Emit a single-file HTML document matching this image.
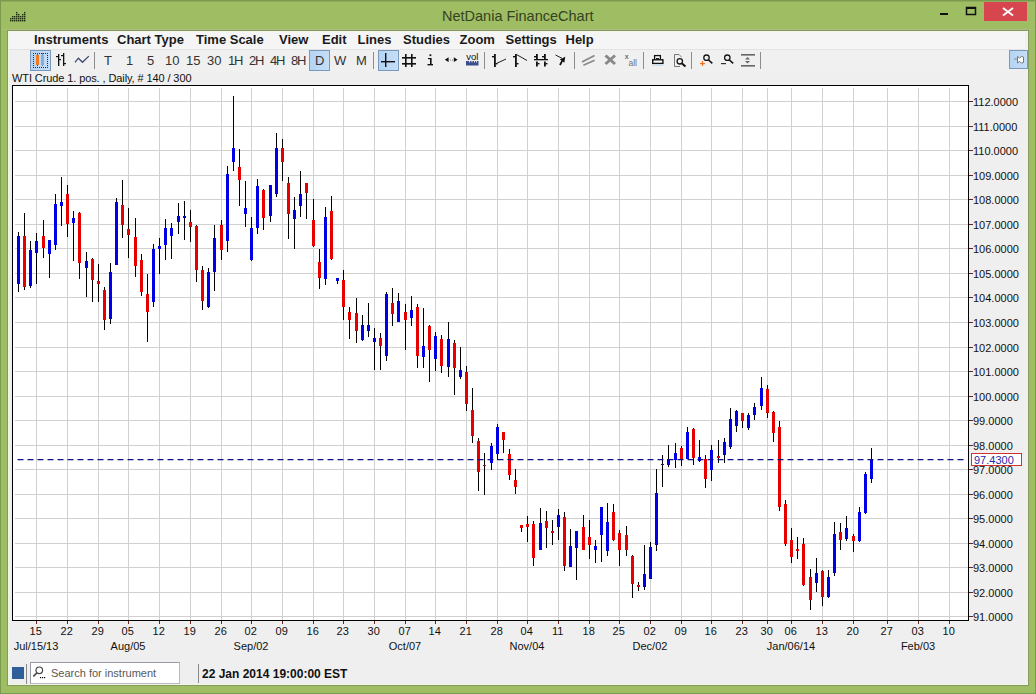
<!DOCTYPE html>
<html><head><meta charset="utf-8">
<style>
html,body{margin:0;padding:0;}
body{width:1036px;height:694px;overflow:hidden;position:relative;background:#9fbd63;font-family:"Liberation Sans",sans-serif;}
.abs{position:absolute;}
#title{position:absolute;left:0;top:0;width:1036px;height:30px;}
#client{position:absolute;left:7px;top:30px;width:1022px;height:656px;background:#efefef;border:1px solid #86995f;box-sizing:border-box;}
#client2{position:absolute;left:8px;top:31px;width:1020px;height:654px;border:1px solid #f0f8e4;box-sizing:border-box;}
#edge{position:absolute;left:0;top:0;width:1036px;height:694px;border:1px solid #7a9a4e;box-sizing:border-box;}
#menubar{position:absolute;left:9px;top:32px;width:1016px;height:17px;background:#f5f5f5;border-bottom:1px solid #e3e3e3;}
#menubar span{position:absolute;top:0px;font-weight:bold;font-size:13px;color:#1a1a1a;}
#toolbar{position:absolute;left:9px;top:50px;width:1018px;height:22px;background:#f0f0f0;}
.tb{position:absolute;top:53.5px;font-size:13px;color:#333;line-height:13px;}
.sel{position:absolute;background:linear-gradient(90deg,#b4d4f3,#c6def7);border:1px solid #7898bc;box-sizing:border-box;}
.sep{position:absolute;width:1px;background:#9a9a9a;}
svg text.ax{font-family:"Liberation Sans",sans-serif;font-size:11px;fill:#111;}
</style></head><body>
<div id="title">
  <div class="abs" style="left:0;top:0;width:1036px;height:1px;background:#74904a"></div><div class="abs" style="left:0;top:1px;width:1036px;height:1px;background:#8eac5c"></div>
  <div class="abs" style="left:0;top:29px;width:1036px;height:1px;background:#aabb86"></div>
  <div class="abs" style="left:442px;top:7.5px;font-size:14.5px;color:#334322;">NetDania FinanceChart</div>
  <div class="abs" style="left:984px;top:2px;width:43px;height:19px;background:#d7464e;"></div>
  <svg class="abs" style="left:0;top:0" width="1036" height="30">
    <g fill="#fff"><path d="M1003 8 L1013 15.5 M1013 8 L1003 15.5" stroke="#fff" stroke-width="1.8"/></g>
    <rect x="940" y="13" width="8" height="2" fill="#111"/>
    <rect x="966.5" y="7.5" width="9" height="7" fill="none" stroke="#111" stroke-width="1.5"/>
    <rect x="966" y="7" width="10" height="2" fill="#111"/>
    <g fill="#1c2a10"><rect x="16" y="12" width="1.4" height="1.4"/><rect x="24" y="12" width="1.4" height="1.4"/><rect x="16" y="14" width="1.4" height="1.4"/><rect x="18" y="14" width="1.4" height="1.4"/><rect x="22" y="14" width="1.4" height="1.4"/><rect x="24" y="14" width="1.4" height="1.4"/><rect x="12" y="16" width="1.4" height="1.4"/><rect x="14" y="16" width="1.4" height="1.4"/><rect x="16" y="16" width="1.4" height="1.4"/><rect x="18" y="16" width="1.4" height="1.4"/><rect x="20" y="16" width="1.4" height="1.4"/><rect x="22" y="16" width="1.4" height="1.4"/><rect x="24" y="16" width="1.4" height="1.4"/><rect x="10" y="18" width="1.4" height="1.4"/><rect x="12" y="18" width="1.4" height="1.4"/><rect x="14" y="18" width="1.4" height="1.4"/><rect x="16" y="18" width="1.4" height="1.4"/><rect x="18" y="18" width="1.4" height="1.4"/><rect x="20" y="18" width="1.4" height="1.4"/><rect x="22" y="18" width="1.4" height="1.4"/><rect x="24" y="18" width="1.4" height="1.4"/><rect x="10" y="20" width="1.4" height="1.4"/><rect x="12" y="20" width="1.4" height="1.4"/><rect x="14" y="20" width="1.4" height="1.4"/><rect x="16" y="20" width="1.4" height="1.4"/><rect x="18" y="20" width="1.4" height="1.4"/><rect x="20" y="20" width="1.4" height="1.4"/><rect x="22" y="20" width="1.4" height="1.4"/><rect x="24" y="20" width="1.4" height="1.4"/></g>
  </svg>
</div>
<div id="edge"></div><div id="client"></div><div id="client2"></div>
<div id="menubar">
  <span style="left:25px">Instruments</span>
  <span style="left:108px">Chart Type</span>
  <span style="left:187px">Time Scale</span>
  <span style="left:270px">View</span>
  <span style="left:313px">Edit</span>
  <span style="left:348.5px">Lines</span>
  <span style="left:394px">Studies</span>
  <span style="left:450.5px">Zoom</span>
  <span style="left:496.5px">Settings</span>
  <span style="left:556.5px">Help</span>
</div>
<div id="toolbar"></div>
<div class="sel" style="left:30px;top:50px;width:21px;height:21px;"></div>
<div class="sel" style="left:309px;top:50px;width:21px;height:21px;"></div>
<div class="sel" style="left:378px;top:50px;width:21px;height:21px;"></div>
<div class="sel" style="left:1009px;top:50px;width:19px;height:19px;"></div>
<svg class="abs" style="left:0;top:0" width="1036" height="80">
<g fill="#1a2a4a"><rect x="33" y="53" width="1" height="1"/><rect x="33" y="67" width="1" height="1"/><rect x="35" y="53" width="1" height="1"/><rect x="35" y="67" width="1" height="1"/><rect x="37" y="53" width="1" height="1"/><rect x="37" y="67" width="1" height="1"/><rect x="39" y="53" width="1" height="1"/><rect x="39" y="67" width="1" height="1"/><rect x="41" y="53" width="1" height="1"/><rect x="41" y="67" width="1" height="1"/><rect x="43" y="53" width="1" height="1"/><rect x="43" y="67" width="1" height="1"/><rect x="45" y="53" width="1" height="1"/><rect x="45" y="67" width="1" height="1"/><rect x="47" y="53" width="1" height="1"/><rect x="47" y="67" width="1" height="1"/><rect x="33" y="55" width="1" height="1"/><rect x="47" y="55" width="1" height="1"/><rect x="33" y="57" width="1" height="1"/><rect x="47" y="57" width="1" height="1"/><rect x="33" y="59" width="1" height="1"/><rect x="47" y="59" width="1" height="1"/><rect x="33" y="61" width="1" height="1"/><rect x="47" y="61" width="1" height="1"/><rect x="33" y="63" width="1" height="1"/><rect x="47" y="63" width="1" height="1"/><rect x="33" y="65" width="1" height="1"/><rect x="47" y="65" width="1" height="1"/></g>
<rect x="37" y="53" width="1" height="13" fill="#7a4a20"/><rect x="36" y="55" width="3" height="10" fill="#f07a20"/>
<rect x="42" y="53" width="1" height="13" fill="#6080b0"/><rect x="41" y="55" width="3" height="10" fill="#88acdc"/>
<g fill="#111">
<rect x="58" y="54" width="1.3" height="12"/><rect x="56" y="56" width="2" height="1.2"/><rect x="59" y="59" width="2" height="1.2"/>
<rect x="63" y="53" width="1.3" height="13"/><rect x="61" y="55" width="2" height="1.2"/><rect x="64" y="63" width="2" height="1.2"/>
</g>
<polyline points="75,62.3 78.4,58.2 82.5,62.3 88.8,56.1" fill="none" stroke="#3a4a6a" stroke-width="1.3"/>
<g fill="#8c8c8c">
<rect x="94" y="52" width="1" height="17"/><rect x="373" y="52" width="1" height="17"/><rect x="484" y="52" width="1" height="17"/>
<rect x="574" y="52" width="1" height="17"/><rect x="643" y="52" width="1" height="17"/><rect x="691" y="52" width="1" height="17"/><rect x="760" y="52" width="1" height="17"/>
</g>
<g fill="#111">
<rect x="385" y="53" width="1.4" height="14"/><rect x="381" y="61" width="14" height="1.4"/>
<rect x="405" y="54" width="1.6" height="13"/><rect x="411" y="54" width="1.6" height="13"/>
<rect x="402" y="57" width="14" height="1.6"/><rect x="402" y="63" width="14" height="1.6"/>
<rect x="429.5" y="54.3" width="1.8" height="1.8"/><rect x="430" y="58" width="1.6" height="6.5"/><rect x="428" y="58" width="2" height="1.2"/><rect x="427.5" y="64" width="5.5" height="1.4"/>
<polygon points="444.8,59.7 448.6,57.3 448.6,62.1"/><polygon points="457.6,59.7 453.8,57.3 453.8,62.1"/>
<rect x="450" y="59.5" width="1" height="1" fill="#777"/><rect x="452" y="59.5" width="1" height="1" fill="#777"/>
</g>
<text x="466.3" y="60.2" style="font:9.5px 'Liberation Sans',sans-serif" fill="#111">vol</text>
<rect x="466" y="61" width="12.5" height="4.5" fill="#3c4c8c"/>
<g fill="#dde"><rect x="469" y="61" width="1" height="1.5"/><rect x="471.5" y="61" width="1" height="1.5"/><rect x="474" y="61" width="1" height="1.5"/><rect x="476" y="61" width="1" height="1.5"/></g>
<g fill="#111">
<rect x="494" y="54" width="1.8" height="13"/><rect x="492" y="56" width="2" height="1.4"/><rect x="495.5" y="63" width="2" height="1.4"/>
<rect x="515" y="54" width="1.8" height="13"/><rect x="513" y="56" width="2" height="1.4"/><rect x="516.5" y="63" width="2" height="1.4"/>
<rect x="536" y="54" width="1.8" height="5.5"/><rect x="536" y="61.5" width="1.8" height="5"/><rect x="544" y="54" width="1.8" height="5.5"/><rect x="544" y="61.5" width="1.8" height="5"/>
<rect x="534" y="59" width="14" height="1.3"/>
<rect x="534" y="56" width="2" height="1.4"/><rect x="542" y="56" width="2" height="1.4"/><rect x="537.5" y="63" width="2" height="1.4"/><rect x="545.5" y="63" width="2" height="1.4"/>
<polygon points="565.3,56.8 564.3,62.8 562.8,61.6 560.8,65.6 559.2,64.6 561.4,60.6 559.8,59.6"/>
</g>
<line x1="497" y1="63.2" x2="506" y2="59" stroke="#222" stroke-width="1"/>
<line x1="516.5" y1="54.5" x2="527" y2="60.5" stroke="#222" stroke-width="1"/>
<line x1="555.5" y1="55" x2="562" y2="58.3" stroke="#222" stroke-width="1"/>
<g stroke="#8a8a8a" stroke-width="1.8" fill="none">
<line x1="582" y1="62" x2="594.6" y2="55.5"/><line x1="583.4" y1="65.2" x2="594.6" y2="60.2"/>
</g>
<g stroke="#888" stroke-width="3"><line x1="605.5" y1="55.5" x2="615" y2="64"/><line x1="615" y1="55.5" x2="605.5" y2="64"/></g>
<text x="624.8" y="58.6" style="font:bold 7px 'Liberation Sans',sans-serif;fill:#707070">x</text>
<text x="628.5" y="65.8" style="font:8.5px 'Liberation Sans',sans-serif;fill:#707070">all</text>
<rect x="654.6" y="55.6" width="5.8" height="5" fill="#fff" stroke="#111" stroke-width="1.3"/>
<rect x="652.7" y="59.8" width="10.2" height="3.6" fill="#fff" stroke="#111" stroke-width="1.4"/>
<rect x="656" y="58" width="3" height="1" fill="#111"/>
<rect x="653" y="64" width="10" height="2" fill="#cfe0f0"/>
<path d="M674.5 54.5 H679 L681.5 57 M674.5 54.5 V66.5 H680" fill="none" stroke="#777" stroke-width="1"/>
<circle cx="679.8" cy="61.3" r="2.7" fill="#f4f4f4" stroke="#151515" stroke-width="1.3"/>
<line x1="682" y1="63.5" x2="685.5" y2="66.5" stroke="#111" stroke-width="2"/>
<circle cx="706.5" cy="57.7" r="2.7" fill="none" stroke="#151515" stroke-width="1.3"/>
<line x1="708.6" y1="60" x2="712.3" y2="63.4" stroke="#151515" stroke-width="1.6"/>
<g fill="#f07020"><rect x="700" y="63" width="5" height="1.2"/><rect x="701.9" y="61" width="1.2" height="5"/></g>
<circle cx="727.3" cy="57.7" r="2.7" fill="none" stroke="#151515" stroke-width="1.3"/>
<line x1="729.4" y1="60" x2="733.2" y2="63.4" stroke="#151515" stroke-width="1.6"/>
<rect x="721" y="63" width="5" height="1.2" fill="#333"/>
<g fill="#666"><rect x="741" y="54" width="14" height="1.6"/><rect x="741" y="65" width="14" height="1.6"/>
<polygon points="747.5,57 745,59.5 750,59.5"/><polygon points="747.5,63.5 745,61 750,61"/></g>
<path d="M1017.5 56.5 L1019.5 58 L1021.5 56.5 L1023.5 57 L1023.5 62.5 L1021.5 63 L1019.5 61.5 L1017.5 63 Z" fill="#fff" stroke="#777" stroke-width="1"/>
<rect x="1014" y="58.5" width="3" height="1" fill="#888"/>
</svg>
<div class="tb" style="left:104px">T</div>
<div class="tb" style="left:126px">1</div>
<div class="tb" style="left:147px">5</div>
<div class="tb" style="left:165px">10</div>
<div class="tb" style="left:186px">15</div>
<div class="tb" style="left:207px">30</div>
<div class="tb" style="left:228px"><span style="letter-spacing:-1.3px">1</span>H</div>
<div class="tb" style="left:249px"><span style="letter-spacing:-1.3px">2</span>H</div>
<div class="tb" style="left:270px"><span style="letter-spacing:-1.3px">4</span>H</div>
<div class="tb" style="left:291px"><span style="letter-spacing:-1.3px">8</span>H</div>
<div class="tb" style="left:315px">D</div>
<div class="tb" style="left:334px">W</div>
<div class="tb" style="left:356px">M</div>
<div class="abs" style="left:12px;top:72px;font-size:11px;color:#111;letter-spacing:-0.1px;">WTI Crude 1. pos. , Daily, # 140 / 300</div>
<svg class="abs" style="left:0;top:0" width="1036" height="694">
<rect x="13" y="86" width="955" height="534" fill="#fff"/>
<rect x="15" y="616" width="953" height="1" fill="#d0d0d0"/>
<rect x="15" y="592" width="953" height="1" fill="#d0d0d0"/>
<rect x="15" y="567" width="953" height="1" fill="#d0d0d0"/>
<rect x="15" y="543" width="953" height="1" fill="#d0d0d0"/>
<rect x="15" y="518" width="953" height="1" fill="#d0d0d0"/>
<rect x="15" y="494" width="953" height="1" fill="#d0d0d0"/>
<rect x="15" y="469" width="953" height="1" fill="#d0d0d0"/>
<rect x="15" y="445" width="953" height="1" fill="#d0d0d0"/>
<rect x="15" y="420" width="953" height="1" fill="#d0d0d0"/>
<rect x="15" y="396" width="953" height="1" fill="#d0d0d0"/>
<rect x="15" y="371" width="953" height="1" fill="#d0d0d0"/>
<rect x="15" y="347" width="953" height="1" fill="#d0d0d0"/>
<rect x="15" y="322" width="953" height="1" fill="#d0d0d0"/>
<rect x="15" y="297" width="953" height="1" fill="#d0d0d0"/>
<rect x="15" y="273" width="953" height="1" fill="#d0d0d0"/>
<rect x="15" y="248" width="953" height="1" fill="#d0d0d0"/>
<rect x="15" y="224" width="953" height="1" fill="#d0d0d0"/>
<rect x="15" y="199" width="953" height="1" fill="#d0d0d0"/>
<rect x="15" y="175" width="953" height="1" fill="#d0d0d0"/>
<rect x="15" y="150" width="953" height="1" fill="#d0d0d0"/>
<rect x="15" y="126" width="953" height="1" fill="#d0d0d0"/>
<rect x="15" y="101" width="953" height="1" fill="#d0d0d0"/>
<rect x="36" y="88" width="1" height="532" fill="#d0d0d0"/>
<rect x="67" y="88" width="1" height="532" fill="#d0d0d0"/>
<rect x="98" y="88" width="1" height="532" fill="#d0d0d0"/>
<rect x="128" y="88" width="1" height="532" fill="#d0d0d0"/>
<rect x="159" y="88" width="1" height="532" fill="#d0d0d0"/>
<rect x="190" y="88" width="1" height="532" fill="#d0d0d0"/>
<rect x="221" y="88" width="1" height="532" fill="#d0d0d0"/>
<rect x="251" y="88" width="1" height="532" fill="#d0d0d0"/>
<rect x="282" y="88" width="1" height="532" fill="#d0d0d0"/>
<rect x="313" y="88" width="1" height="532" fill="#d0d0d0"/>
<rect x="343" y="88" width="1" height="532" fill="#d0d0d0"/>
<rect x="374" y="88" width="1" height="532" fill="#d0d0d0"/>
<rect x="405" y="88" width="1" height="532" fill="#d0d0d0"/>
<rect x="435" y="88" width="1" height="532" fill="#d0d0d0"/>
<rect x="466" y="88" width="1" height="532" fill="#d0d0d0"/>
<rect x="497" y="88" width="1" height="532" fill="#d0d0d0"/>
<rect x="527" y="88" width="1" height="532" fill="#d0d0d0"/>
<rect x="558" y="88" width="1" height="532" fill="#d0d0d0"/>
<rect x="589" y="88" width="1" height="532" fill="#d0d0d0"/>
<rect x="619" y="88" width="1" height="532" fill="#d0d0d0"/>
<rect x="650" y="88" width="1" height="532" fill="#d0d0d0"/>
<rect x="681" y="88" width="1" height="532" fill="#d0d0d0"/>
<rect x="711" y="88" width="1" height="532" fill="#d0d0d0"/>
<rect x="742" y="88" width="1" height="532" fill="#d0d0d0"/>
<rect x="767" y="88" width="1" height="532" fill="#d0d0d0"/>
<rect x="791" y="88" width="1" height="532" fill="#d0d0d0"/>
<rect x="822" y="88" width="1" height="532" fill="#d0d0d0"/>
<rect x="853" y="88" width="1" height="532" fill="#d0d0d0"/>
<rect x="887" y="88" width="1" height="532" fill="#d0d0d0"/>
<rect x="918" y="88" width="1" height="532" fill="#d0d0d0"/>
<rect x="949" y="88" width="1" height="532" fill="#d0d0d0"/>
<rect x="18" y="232" width="1" height="60" fill="#000"/>
<rect x="17" y="236" width="3" height="48" fill="#0000e6"/>
<rect x="24" y="213" width="1" height="77" fill="#000"/>
<rect x="23" y="236" width="3" height="51" fill="#e60000"/>
<rect x="30" y="241" width="1" height="47" fill="#000"/>
<rect x="29" y="250" width="3" height="36" fill="#0000e6"/>
<rect x="36" y="233" width="1" height="51" fill="#000"/>
<rect x="35" y="241" width="3" height="12" fill="#0000e6"/>
<rect x="43" y="220" width="1" height="38" fill="#000"/>
<rect x="42" y="236" width="3" height="12" fill="#e60000"/>
<rect x="49" y="240" width="1" height="38" fill="#000"/>
<rect x="48" y="240" width="3" height="14" fill="#0000e6"/>
<rect x="55" y="194" width="1" height="56" fill="#000"/>
<rect x="54" y="204" width="3" height="41" fill="#0000e6"/>
<rect x="61" y="177" width="1" height="49" fill="#000"/>
<rect x="60" y="202" width="3" height="4" fill="#0000e6"/>
<rect x="67" y="185" width="1" height="52" fill="#000"/>
<rect x="66" y="194" width="3" height="30" fill="#e60000"/>
<rect x="73" y="211" width="1" height="50" fill="#000"/>
<rect x="72" y="218" width="3" height="5" fill="#0000e6"/>
<rect x="79" y="212" width="1" height="67" fill="#000"/>
<rect x="78" y="213" width="3" height="50" fill="#e60000"/>
<rect x="86" y="252" width="1" height="45" fill="#000"/>
<rect x="85" y="261" width="3" height="7" fill="#0000e6"/>
<rect x="92" y="258" width="1" height="44" fill="#000"/>
<rect x="91" y="259" width="3" height="21" fill="#e60000"/>
<rect x="98" y="264" width="1" height="38" fill="#000"/>
<rect x="97" y="281" width="3" height="3" fill="#e60000"/>
<rect x="104" y="287" width="1" height="43" fill="#000"/>
<rect x="103" y="290" width="3" height="30" fill="#e60000"/>
<rect x="110" y="263" width="1" height="61" fill="#000"/>
<rect x="109" y="272" width="3" height="47" fill="#0000e6"/>
<rect x="116" y="198" width="1" height="67" fill="#000"/>
<rect x="115" y="202" width="3" height="63" fill="#0000e6"/>
<rect x="122" y="180" width="1" height="58" fill="#000"/>
<rect x="121" y="205" width="3" height="20" fill="#e60000"/>
<rect x="128" y="208" width="1" height="50" fill="#000"/>
<rect x="127" y="229" width="3" height="6" fill="#e60000"/>
<rect x="135" y="218" width="1" height="59" fill="#000"/>
<rect x="134" y="237" width="3" height="29" fill="#e60000"/>
<rect x="141" y="254" width="1" height="42" fill="#000"/>
<rect x="140" y="260" width="3" height="32" fill="#e60000"/>
<rect x="147" y="274" width="1" height="68" fill="#000"/>
<rect x="146" y="294" width="3" height="18" fill="#e60000"/>
<rect x="153" y="244" width="1" height="63" fill="#000"/>
<rect x="152" y="249" width="3" height="53" fill="#0000e6"/>
<rect x="159" y="238" width="1" height="36" fill="#000"/>
<rect x="158" y="246" width="3" height="3" fill="#0000e6"/>
<rect x="165" y="219" width="1" height="41" fill="#000"/>
<rect x="164" y="228" width="3" height="17" fill="#0000e6"/>
<rect x="171" y="223" width="1" height="36" fill="#000"/>
<rect x="170" y="228" width="3" height="8" fill="#0000e6"/>
<rect x="178" y="203" width="1" height="31" fill="#000"/>
<rect x="177" y="216" width="3" height="6" fill="#0000e6"/>
<rect x="184" y="201" width="1" height="39" fill="#000"/>
<rect x="183" y="216" width="3" height="2" fill="#0000e6"/>
<rect x="190" y="210" width="1" height="32" fill="#000"/>
<rect x="189" y="222" width="3" height="5" fill="#e60000"/>
<rect x="196" y="225" width="1" height="57" fill="#000"/>
<rect x="195" y="226" width="3" height="44" fill="#e60000"/>
<rect x="202" y="266" width="1" height="44" fill="#000"/>
<rect x="201" y="270" width="3" height="31" fill="#e60000"/>
<rect x="208" y="268" width="1" height="40" fill="#000"/>
<rect x="207" y="272" width="3" height="35" fill="#0000e6"/>
<rect x="214" y="225" width="1" height="66" fill="#000"/>
<rect x="213" y="238" width="3" height="34" fill="#0000e6"/>
<rect x="221" y="220" width="1" height="40" fill="#000"/>
<rect x="220" y="225" width="3" height="25" fill="#e60000"/>
<rect x="227" y="166" width="1" height="86" fill="#000"/>
<rect x="226" y="174" width="3" height="67" fill="#0000e6"/>
<rect x="233" y="96" width="1" height="75" fill="#000"/>
<rect x="232" y="148" width="3" height="14" fill="#0000e6"/>
<rect x="239" y="149" width="1" height="57" fill="#000"/>
<rect x="238" y="167" width="3" height="13" fill="#e60000"/>
<rect x="245" y="181" width="1" height="46" fill="#000"/>
<rect x="244" y="208" width="3" height="6" fill="#0000e6"/>
<rect x="251" y="217" width="1" height="44" fill="#000"/>
<rect x="250" y="228" width="3" height="32" fill="#0000e6"/>
<rect x="257" y="179" width="1" height="55" fill="#000"/>
<rect x="256" y="186" width="3" height="42" fill="#0000e6"/>
<rect x="263" y="189" width="1" height="41" fill="#000"/>
<rect x="262" y="190" width="3" height="28" fill="#e60000"/>
<rect x="270" y="185" width="1" height="37" fill="#000"/>
<rect x="269" y="185" width="3" height="31" fill="#0000e6"/>
<rect x="276" y="133" width="1" height="64" fill="#000"/>
<rect x="275" y="148" width="3" height="46" fill="#0000e6"/>
<rect x="282" y="139" width="1" height="42" fill="#000"/>
<rect x="281" y="148" width="3" height="14" fill="#e60000"/>
<rect x="288" y="177" width="1" height="62" fill="#000"/>
<rect x="287" y="183" width="3" height="31" fill="#e60000"/>
<rect x="294" y="197" width="1" height="52" fill="#000"/>
<rect x="293" y="210" width="3" height="9" fill="#0000e6"/>
<rect x="300" y="171" width="1" height="46" fill="#000"/>
<rect x="299" y="194" width="3" height="12" fill="#0000e6"/>
<rect x="306" y="183" width="1" height="36" fill="#000"/>
<rect x="305" y="183" width="3" height="10" fill="#e60000"/>
<rect x="313" y="199" width="1" height="48" fill="#000"/>
<rect x="312" y="220" width="3" height="26" fill="#e60000"/>
<rect x="319" y="249" width="1" height="40" fill="#000"/>
<rect x="318" y="262" width="3" height="16" fill="#e60000"/>
<rect x="325" y="207" width="1" height="78" fill="#000"/>
<rect x="324" y="217" width="3" height="62" fill="#0000e6"/>
<rect x="331" y="196" width="1" height="64" fill="#000"/>
<rect x="330" y="211" width="3" height="48" fill="#e60000"/>
<rect x="337" y="278" width="1" height="6" fill="#000"/>
<rect x="336" y="278" width="3" height="3" fill="#0000e6"/>
<rect x="343" y="270" width="1" height="50" fill="#000"/>
<rect x="342" y="280" width="3" height="27" fill="#e60000"/>
<rect x="349" y="307" width="1" height="32" fill="#000"/>
<rect x="348" y="312" width="3" height="8" fill="#e60000"/>
<rect x="356" y="298" width="1" height="45" fill="#000"/>
<rect x="355" y="313" width="3" height="18" fill="#e60000"/>
<rect x="362" y="315" width="1" height="26" fill="#000"/>
<rect x="361" y="325" width="3" height="15" fill="#0000e6"/>
<rect x="368" y="303" width="1" height="34" fill="#000"/>
<rect x="367" y="325" width="3" height="6" fill="#0000e6"/>
<rect x="374" y="328" width="1" height="42" fill="#000"/>
<rect x="373" y="338" width="3" height="4" fill="#0000e6"/>
<rect x="380" y="333" width="1" height="37" fill="#000"/>
<rect x="379" y="338" width="3" height="8" fill="#e60000"/>
<rect x="386" y="292" width="1" height="69" fill="#000"/>
<rect x="385" y="294" width="3" height="62" fill="#0000e6"/>
<rect x="392" y="288" width="1" height="38" fill="#000"/>
<rect x="391" y="303" width="3" height="11" fill="#e60000"/>
<rect x="398" y="293" width="1" height="29" fill="#000"/>
<rect x="397" y="301" width="3" height="21" fill="#0000e6"/>
<rect x="405" y="304" width="1" height="46" fill="#000"/>
<rect x="404" y="312" width="3" height="8" fill="#e60000"/>
<rect x="411" y="296" width="1" height="30" fill="#000"/>
<rect x="410" y="310" width="3" height="8" fill="#0000e6"/>
<rect x="417" y="304" width="1" height="64" fill="#000"/>
<rect x="416" y="307" width="3" height="49" fill="#e60000"/>
<rect x="423" y="308" width="1" height="60" fill="#000"/>
<rect x="422" y="346" width="3" height="11" fill="#0000e6"/>
<rect x="429" y="325" width="1" height="57" fill="#000"/>
<rect x="428" y="326" width="3" height="24" fill="#e60000"/>
<rect x="435" y="332" width="1" height="39" fill="#000"/>
<rect x="434" y="336" width="3" height="23" fill="#0000e6"/>
<rect x="441" y="335" width="1" height="38" fill="#000"/>
<rect x="440" y="339" width="3" height="27" fill="#e60000"/>
<rect x="448" y="322" width="1" height="55" fill="#000"/>
<rect x="447" y="339" width="3" height="28" fill="#0000e6"/>
<rect x="454" y="340" width="1" height="55" fill="#000"/>
<rect x="453" y="343" width="3" height="25" fill="#e60000"/>
<rect x="460" y="347" width="1" height="32" fill="#000"/>
<rect x="459" y="370" width="3" height="7" fill="#0000e6"/>
<rect x="466" y="366" width="1" height="45" fill="#000"/>
<rect x="465" y="372" width="3" height="32" fill="#e60000"/>
<rect x="472" y="388" width="1" height="55" fill="#000"/>
<rect x="471" y="410" width="3" height="26" fill="#e60000"/>
<rect x="478" y="438" width="1" height="53" fill="#000"/>
<rect x="477" y="441" width="3" height="31" fill="#e60000"/>
<rect x="484" y="453" width="1" height="42" fill="#000"/>
<rect x="483" y="465" width="3" height="1" fill="#b01010"/>
<rect x="491" y="443" width="1" height="27" fill="#000"/>
<rect x="490" y="446" width="3" height="17" fill="#0000e6"/>
<rect x="497" y="424" width="1" height="36" fill="#000"/>
<rect x="496" y="427" width="3" height="27" fill="#0000e6"/>
<rect x="503" y="432" width="1" height="21" fill="#000"/>
<rect x="502" y="432" width="3" height="8" fill="#e60000"/>
<rect x="509" y="449" width="1" height="31" fill="#000"/>
<rect x="508" y="454" width="3" height="21" fill="#e60000"/>
<rect x="515" y="469" width="1" height="25" fill="#000"/>
<rect x="514" y="480" width="3" height="7" fill="#e60000"/>
<rect x="521" y="525" width="1" height="7" fill="#000"/>
<rect x="520" y="525" width="3" height="3" fill="#e60000"/>
<rect x="527" y="516" width="1" height="26" fill="#000"/>
<rect x="526" y="524" width="3" height="3" fill="#e60000"/>
<rect x="533" y="521" width="1" height="45" fill="#000"/>
<rect x="532" y="524" width="3" height="34" fill="#e60000"/>
<rect x="540" y="508" width="1" height="42" fill="#000"/>
<rect x="539" y="523" width="3" height="27" fill="#0000e6"/>
<rect x="546" y="511" width="1" height="37" fill="#000"/>
<rect x="545" y="521" width="3" height="7" fill="#e60000"/>
<rect x="552" y="520" width="1" height="25" fill="#000"/>
<rect x="551" y="531" width="3" height="2" fill="#e60000"/>
<rect x="558" y="509" width="1" height="31" fill="#000"/>
<rect x="557" y="515" width="3" height="12" fill="#0000e6"/>
<rect x="564" y="512" width="1" height="59" fill="#000"/>
<rect x="563" y="517" width="3" height="49" fill="#e60000"/>
<rect x="570" y="529" width="1" height="38" fill="#000"/>
<rect x="569" y="546" width="3" height="21" fill="#0000e6"/>
<rect x="576" y="531" width="1" height="49" fill="#000"/>
<rect x="575" y="531" width="3" height="17" fill="#0000e6"/>
<rect x="583" y="515" width="1" height="35" fill="#000"/>
<rect x="582" y="527" width="3" height="23" fill="#e60000"/>
<rect x="589" y="520" width="1" height="39" fill="#000"/>
<rect x="588" y="537" width="3" height="8" fill="#e60000"/>
<rect x="595" y="540" width="1" height="23" fill="#000"/>
<rect x="594" y="546" width="3" height="4" fill="#0000e6"/>
<rect x="601" y="507" width="1" height="55" fill="#000"/>
<rect x="600" y="507" width="3" height="28" fill="#0000e6"/>
<rect x="607" y="503" width="1" height="53" fill="#000"/>
<rect x="606" y="522" width="3" height="29" fill="#0000e6"/>
<rect x="613" y="504" width="1" height="37" fill="#000"/>
<rect x="612" y="512" width="3" height="28" fill="#e60000"/>
<rect x="619" y="530" width="1" height="36" fill="#000"/>
<rect x="618" y="533" width="3" height="17" fill="#e60000"/>
<rect x="626" y="526" width="1" height="30" fill="#000"/>
<rect x="625" y="535" width="3" height="15" fill="#e60000"/>
<rect x="632" y="555" width="1" height="43" fill="#000"/>
<rect x="631" y="556" width="3" height="28" fill="#e60000"/>
<rect x="638" y="582" width="1" height="9" fill="#000"/>
<rect x="637" y="585" width="3" height="2" fill="#e60000"/>
<rect x="644" y="545" width="1" height="45" fill="#000"/>
<rect x="643" y="574" width="3" height="13" fill="#0000e6"/>
<rect x="650" y="542" width="1" height="37" fill="#000"/>
<rect x="649" y="547" width="3" height="32" fill="#0000e6"/>
<rect x="656" y="469" width="1" height="82" fill="#000"/>
<rect x="655" y="493" width="3" height="52" fill="#0000e6"/>
<rect x="662" y="455" width="1" height="32" fill="#000"/>
<rect x="661" y="464" width="3" height="1" fill="#222"/>
<rect x="668" y="445" width="1" height="22" fill="#000"/>
<rect x="667" y="459" width="3" height="6" fill="#0000e6"/>
<rect x="675" y="443" width="1" height="25" fill="#000"/>
<rect x="674" y="453" width="3" height="7" fill="#0000e6"/>
<rect x="681" y="446" width="1" height="20" fill="#000"/>
<rect x="680" y="448" width="3" height="12" fill="#e60000"/>
<rect x="687" y="427" width="1" height="32" fill="#000"/>
<rect x="686" y="432" width="3" height="27" fill="#0000e6"/>
<rect x="693" y="428" width="1" height="37" fill="#000"/>
<rect x="692" y="429" width="3" height="29" fill="#e60000"/>
<rect x="699" y="440" width="1" height="22" fill="#000"/>
<rect x="698" y="457" width="3" height="4" fill="#0000e6"/>
<rect x="705" y="455" width="1" height="33" fill="#000"/>
<rect x="704" y="459" width="3" height="20" fill="#e60000"/>
<rect x="711" y="445" width="1" height="36" fill="#000"/>
<rect x="710" y="450" width="3" height="20" fill="#0000e6"/>
<rect x="718" y="440" width="1" height="23" fill="#000"/>
<rect x="717" y="456" width="3" height="2" fill="#e60000"/>
<rect x="724" y="438" width="1" height="25" fill="#000"/>
<rect x="723" y="442" width="3" height="13" fill="#0000e6"/>
<rect x="730" y="408" width="1" height="41" fill="#000"/>
<rect x="729" y="419" width="3" height="28" fill="#0000e6"/>
<rect x="736" y="410" width="1" height="22" fill="#000"/>
<rect x="735" y="411" width="3" height="15" fill="#0000e6"/>
<rect x="742" y="413" width="1" height="15" fill="#000"/>
<rect x="741" y="413" width="3" height="8" fill="#e60000"/>
<rect x="748" y="413" width="1" height="17" fill="#000"/>
<rect x="747" y="415" width="3" height="13" fill="#0000e6"/>
<rect x="754" y="403" width="1" height="17" fill="#000"/>
<rect x="753" y="407" width="3" height="8" fill="#0000e6"/>
<rect x="761" y="377" width="1" height="33" fill="#000"/>
<rect x="760" y="388" width="3" height="18" fill="#0000e6"/>
<rect x="767" y="385" width="1" height="33" fill="#000"/>
<rect x="766" y="389" width="3" height="24" fill="#e60000"/>
<rect x="773" y="411" width="1" height="31" fill="#000"/>
<rect x="772" y="412" width="3" height="21" fill="#e60000"/>
<rect x="779" y="421" width="1" height="90" fill="#000"/>
<rect x="778" y="427" width="3" height="80" fill="#e60000"/>
<rect x="785" y="500" width="1" height="46" fill="#000"/>
<rect x="784" y="504" width="3" height="40" fill="#e60000"/>
<rect x="791" y="528" width="1" height="35" fill="#000"/>
<rect x="790" y="540" width="3" height="17" fill="#e60000"/>
<rect x="797" y="537" width="1" height="22" fill="#000"/>
<rect x="796" y="549" width="3" height="2" fill="#e60000"/>
<rect x="803" y="538" width="1" height="48" fill="#000"/>
<rect x="802" y="544" width="3" height="41" fill="#e60000"/>
<rect x="810" y="569" width="1" height="41" fill="#000"/>
<rect x="809" y="577" width="3" height="23" fill="#e60000"/>
<rect x="816" y="558" width="1" height="34" fill="#000"/>
<rect x="815" y="573" width="3" height="10" fill="#0000e6"/>
<rect x="822" y="570" width="1" height="36" fill="#000"/>
<rect x="821" y="571" width="3" height="26" fill="#e60000"/>
<rect x="828" y="570" width="1" height="28" fill="#000"/>
<rect x="827" y="577" width="3" height="20" fill="#0000e6"/>
<rect x="834" y="522" width="1" height="54" fill="#000"/>
<rect x="833" y="534" width="3" height="39" fill="#0000e6"/>
<rect x="840" y="523" width="1" height="27" fill="#000"/>
<rect x="839" y="532" width="3" height="8" fill="#e60000"/>
<rect x="846" y="516" width="1" height="25" fill="#000"/>
<rect x="845" y="528" width="3" height="11" fill="#0000e6"/>
<rect x="853" y="534" width="1" height="18" fill="#000"/>
<rect x="852" y="536" width="3" height="5" fill="#e60000"/>
<rect x="859" y="507" width="1" height="35" fill="#000"/>
<rect x="858" y="512" width="3" height="29" fill="#0000e6"/>
<rect x="865" y="472" width="1" height="42" fill="#000"/>
<rect x="864" y="474" width="3" height="39" fill="#0000e6"/>
<rect x="871" y="448" width="1" height="35" fill="#000"/>
<rect x="870" y="459" width="3" height="20" fill="#0000e6"/>
<line x1="17.5" y1="459.5" x2="964" y2="459.5" stroke="#0e0e86" stroke-width="1.25" stroke-dasharray="6,4"/>
<rect x="12.5" y="85.5" width="956" height="535" fill="none" stroke="#000" stroke-width="1"/>
<rect x="969" y="616" width="4" height="1" fill="#6a2222"/>
<text x="973" y="621" class="ax">91.0000</text>
<rect x="969" y="592" width="4" height="1" fill="#6a2222"/>
<text x="973" y="597" class="ax">92.0000</text>
<rect x="969" y="567" width="4" height="1" fill="#6a2222"/>
<text x="973" y="572" class="ax">93.0000</text>
<rect x="969" y="543" width="4" height="1" fill="#6a2222"/>
<text x="973" y="548" class="ax">94.0000</text>
<rect x="969" y="518" width="4" height="1" fill="#6a2222"/>
<text x="973" y="523" class="ax">95.0000</text>
<rect x="969" y="494" width="4" height="1" fill="#6a2222"/>
<text x="973" y="499" class="ax">96.0000</text>
<rect x="969" y="469" width="4" height="1" fill="#6a2222"/>
<text x="973" y="474" class="ax">97.0000</text>
<rect x="969" y="445" width="4" height="1" fill="#6a2222"/>
<text x="973" y="450" class="ax">98.0000</text>
<rect x="969" y="420" width="4" height="1" fill="#6a2222"/>
<text x="973" y="425" class="ax">99.0000</text>
<rect x="969" y="396" width="4" height="1" fill="#6a2222"/>
<text x="973" y="401" class="ax">100.0000</text>
<rect x="969" y="371" width="4" height="1" fill="#6a2222"/>
<text x="973" y="376" class="ax">101.0000</text>
<rect x="969" y="347" width="4" height="1" fill="#6a2222"/>
<text x="973" y="352" class="ax">102.0000</text>
<rect x="969" y="322" width="4" height="1" fill="#6a2222"/>
<text x="973" y="327" class="ax">103.0000</text>
<rect x="969" y="297" width="4" height="1" fill="#6a2222"/>
<text x="973" y="302" class="ax">104.0000</text>
<rect x="969" y="273" width="4" height="1" fill="#6a2222"/>
<text x="973" y="278" class="ax">105.0000</text>
<rect x="969" y="248" width="4" height="1" fill="#6a2222"/>
<text x="973" y="253" class="ax">106.0000</text>
<rect x="969" y="224" width="4" height="1" fill="#6a2222"/>
<text x="973" y="229" class="ax">107.0000</text>
<rect x="969" y="199" width="4" height="1" fill="#6a2222"/>
<text x="973" y="204" class="ax">108.0000</text>
<rect x="969" y="175" width="4" height="1" fill="#6a2222"/>
<text x="973" y="180" class="ax">109.0000</text>
<rect x="969" y="150" width="4" height="1" fill="#6a2222"/>
<text x="973" y="155" class="ax">110.0000</text>
<rect x="969" y="126" width="4" height="1" fill="#6a2222"/>
<text x="973" y="131" class="ax">111.0000</text>
<rect x="969" y="101" width="4" height="1" fill="#6a2222"/>
<text x="973" y="106" class="ax">112.0000</text>
<rect x="36" y="621" width="1" height="3" fill="#6a2222"/>
<text x="35.7" y="635" class="ax" text-anchor="middle">15</text>
<rect x="67" y="621" width="1" height="3" fill="#6a2222"/>
<text x="66.7" y="635" class="ax" text-anchor="middle">22</text>
<rect x="98" y="621" width="1" height="3" fill="#6a2222"/>
<text x="97.7" y="635" class="ax" text-anchor="middle">29</text>
<rect x="128" y="621" width="1" height="3" fill="#6a2222"/>
<text x="127.7" y="635" class="ax" text-anchor="middle">05</text>
<rect x="159" y="621" width="1" height="3" fill="#6a2222"/>
<text x="158.7" y="635" class="ax" text-anchor="middle">12</text>
<rect x="190" y="621" width="1" height="3" fill="#6a2222"/>
<text x="189.7" y="635" class="ax" text-anchor="middle">19</text>
<rect x="221" y="621" width="1" height="3" fill="#6a2222"/>
<text x="220.7" y="635" class="ax" text-anchor="middle">26</text>
<rect x="251" y="621" width="1" height="3" fill="#6a2222"/>
<text x="250.7" y="635" class="ax" text-anchor="middle">02</text>
<rect x="282" y="621" width="1" height="3" fill="#6a2222"/>
<text x="281.7" y="635" class="ax" text-anchor="middle">09</text>
<rect x="313" y="621" width="1" height="3" fill="#6a2222"/>
<text x="312.7" y="635" class="ax" text-anchor="middle">16</text>
<rect x="343" y="621" width="1" height="3" fill="#6a2222"/>
<text x="342.7" y="635" class="ax" text-anchor="middle">23</text>
<rect x="374" y="621" width="1" height="3" fill="#6a2222"/>
<text x="373.7" y="635" class="ax" text-anchor="middle">30</text>
<rect x="405" y="621" width="1" height="3" fill="#6a2222"/>
<text x="404.7" y="635" class="ax" text-anchor="middle">07</text>
<rect x="435" y="621" width="1" height="3" fill="#6a2222"/>
<text x="434.7" y="635" class="ax" text-anchor="middle">14</text>
<rect x="466" y="621" width="1" height="3" fill="#6a2222"/>
<text x="465.7" y="635" class="ax" text-anchor="middle">21</text>
<rect x="497" y="621" width="1" height="3" fill="#6a2222"/>
<text x="496.7" y="635" class="ax" text-anchor="middle">28</text>
<rect x="527" y="621" width="1" height="3" fill="#6a2222"/>
<text x="526.7" y="635" class="ax" text-anchor="middle">04</text>
<rect x="558" y="621" width="1" height="3" fill="#6a2222"/>
<text x="557.7" y="635" class="ax" text-anchor="middle">11</text>
<rect x="589" y="621" width="1" height="3" fill="#6a2222"/>
<text x="588.7" y="635" class="ax" text-anchor="middle">18</text>
<rect x="619" y="621" width="1" height="3" fill="#6a2222"/>
<text x="618.7" y="635" class="ax" text-anchor="middle">25</text>
<rect x="650" y="621" width="1" height="3" fill="#6a2222"/>
<text x="649.7" y="635" class="ax" text-anchor="middle">02</text>
<rect x="681" y="621" width="1" height="3" fill="#6a2222"/>
<text x="680.7" y="635" class="ax" text-anchor="middle">09</text>
<rect x="711" y="621" width="1" height="3" fill="#6a2222"/>
<text x="710.7" y="635" class="ax" text-anchor="middle">16</text>
<rect x="742" y="621" width="1" height="3" fill="#6a2222"/>
<text x="741.7" y="635" class="ax" text-anchor="middle">23</text>
<rect x="767" y="621" width="1" height="3" fill="#6a2222"/>
<text x="766.7" y="635" class="ax" text-anchor="middle">30</text>
<rect x="791" y="621" width="1" height="3" fill="#6a2222"/>
<text x="790.7" y="635" class="ax" text-anchor="middle">06</text>
<rect x="822" y="621" width="1" height="3" fill="#6a2222"/>
<text x="821.7" y="635" class="ax" text-anchor="middle">13</text>
<rect x="853" y="621" width="1" height="3" fill="#6a2222"/>
<text x="852.7" y="635" class="ax" text-anchor="middle">20</text>
<rect x="887" y="621" width="1" height="3" fill="#6a2222"/>
<text x="886.7" y="635" class="ax" text-anchor="middle">27</text>
<rect x="918" y="621" width="1" height="3" fill="#6a2222"/>
<text x="917.7" y="635" class="ax" text-anchor="middle">03</text>
<rect x="949" y="621" width="1" height="3" fill="#6a2222"/>
<text x="948.7" y="635" class="ax" text-anchor="middle">10</text>
<text x="36" y="650" class="ax" text-anchor="middle">Jul/15/13</text>
<text x="128" y="650" class="ax" text-anchor="middle">Aug/05</text>
<text x="251" y="650" class="ax" text-anchor="middle">Sep/02</text>
<text x="405" y="650" class="ax" text-anchor="middle">Oct/07</text>
<text x="527" y="650" class="ax" text-anchor="middle">Nov/04</text>
<text x="650" y="650" class="ax" text-anchor="middle">Dec/02</text>
<text x="791" y="650" class="ax" text-anchor="middle">Jan/06/14</text>
<text x="918" y="650" class="ax" text-anchor="middle">Feb/03</text>
<rect x="971.5" y="453.5" width="50" height="12" fill="#fff" stroke="#d03030" stroke-width="1"/>
<text x="974" y="464" class="ax" style="fill:#2a2aa8">97.4300</text>
</svg>
<!-- status bar -->
<div class="abs" style="left:12px;top:667px;width:12px;height:12px;background:#2e5f9a;"></div>
<div class="abs" style="left:26px;top:664px;width:1px;height:20px;background:#888;"></div>
<div class="abs" style="left:30px;top:662px;width:150px;height:22px;background:#fff;border:1px solid #9a9aa6;border-bottom-color:#b8b8c4;border-right-color:#b8b8c4;box-sizing:border-box;"></div>
<div class="abs" style="left:51px;top:667px;font-size:11px;color:#585858;">Search for instrument</div>
<svg class="abs" style="left:0;top:650px" width="60" height="40"><circle cx="39.3" cy="20.3" r="3.3" fill="none" stroke="#444" stroke-width="1.2"/><line x1="36.8" y1="23" x2="33.3" y2="26.3" stroke="#444" stroke-width="1.6"/><g fill="#111"><rect x="40" y="27" width="1.2" height="1.2"/><rect x="42" y="27" width="1.2" height="1.2"/><rect x="44" y="27" width="1.2" height="1.2"/></g></svg>
<div class="abs" style="left:198px;top:664px;width:1px;height:19px;background:#888;"></div>
<div class="abs" style="left:202px;top:667px;font-size:12px;font-weight:bold;color:#111;">22 Jan 2014 19:00:00 EST</div>
</body></html>
